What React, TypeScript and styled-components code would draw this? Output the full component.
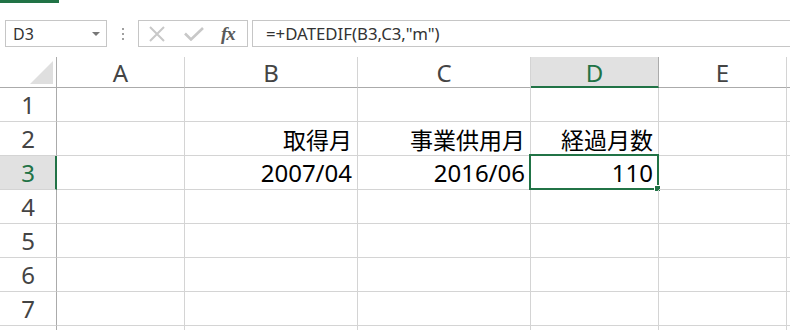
import * as React from 'react'
import styled, { createGlobalStyle, css } from 'styled-components'

const GREEN = '#217346'
const GRID = '#d4d4d4'
const HEAD_LINE = '#ababab'
const SEL_BG = '#e1e1e1'

const GlobalStyle = createGlobalStyle`
  html, body {
    margin: 0;
    padding: 0;
    background: #ffffff;
    overflow: hidden;
  }
  body {
    font-family: 'Noto Sans', 'Noto Sans CJK JP', sans-serif;
  }
`

const Page = styled.div`
  width: 790px;
  height: 330px;
  overflow: hidden;
  background: #ffffff;
`

const TabStrip = styled.div`
  width: 59px;
  height: 3px;
  background: ${GREEN};
`

const FormulaRow = styled.div`
  display: flex;
  align-items: center;
  height: 27px;
  margin-top: 17px;
  padding-left: 5px;
`

const NameBox = styled.div`
  box-sizing: border-box;
  width: 102px;
  height: 27px;
  border: 1px solid #c6c6c6;
  display: flex;
  align-items: center;
  justify-content: space-between;
  padding: 0 6px 0 7px;
  font-size: 16px;
  color: #333;
`

const DropArrow = styled.span`
  width: 0;
  height: 0;
  border-left: 4px solid transparent;
  border-right: 4px solid transparent;
  border-top: 4px solid #777;
`

const Grip = styled.div`
  width: 31px;
  display: flex;
  flex-direction: column;
  align-items: center;
  gap: 3px;
`

const GripDot = styled.span`
  width: 2px;
  height: 2px;
  background: #a0a0a0;
`

const FxBox = styled.div`
  box-sizing: border-box;
  width: 110px;
  height: 27px;
  border: 1px solid #c6c6c6;
  display: flex;
  align-items: center;
  padding-left: 9px;
`

const IconSlot = styled.span`
  width: 36px;
  display: flex;
  align-items: center;
`

const FxText = styled.span`
  font-family: 'Liberation Serif', 'DejaVu Serif', serif;
  font-style: italic;
  font-weight: bold;
  font-size: 19px;
  color: #5a5a5a;
  letter-spacing: -1px;
  margin-left: 1px;
`

const FormulaInput = styled.div`
  box-sizing: border-box;
  flex: 1;
  height: 27px;
  margin-left: 4px;
  border: 1px solid #c6c6c6;
  border-right: none;
  display: flex;
  align-items: center;
  padding-left: 13px;
  font-size: 16.8px;
  color: #333;
  white-space: nowrap;
`

const Sheet = styled.div`
  margin-top: 10px;
  display: grid;
  grid-template-columns: 57px 128px 173px 173px 128px 128px 1fr;
  grid-auto-rows: 34px;
  grid-template-rows: 31px;
`

const Corner = styled.div`
  box-sizing: border-box;
  border-right: 1px solid ${HEAD_LINE};
  border-bottom: 1px solid ${HEAD_LINE};
  display: flex;
  align-items: flex-end;
  justify-content: flex-end;
  padding: 0 3px 3px 0;
`

const ColHead = styled.div<{ $active?: boolean }>`
  box-sizing: border-box;
  border-right: 1px solid ${GRID};
  border-bottom: 1px solid ${HEAD_LINE};
  display: flex;
  align-items: center;
  justify-content: center;
  font-size: 24px;
  color: #444;
  ${(p) =>
    p.$active &&
    css`
      background: ${SEL_BG};
      color: ${GREEN};
      border-right-color: ${HEAD_LINE};
      border-bottom: 2px solid ${GREEN};
      padding-top: 1px;
    `}
`

const RowHead = styled.div<{ $active?: boolean }>`
  box-sizing: border-box;
  border-right: 1px solid ${HEAD_LINE};
  border-bottom: 1px solid ${GRID};
  display: flex;
  align-items: center;
  justify-content: center;
  font-size: 24px;
  color: #444;
  ${(p) =>
    p.$active &&
    css`
      background: ${SEL_BG};
      color: ${GREEN};
      border-right: 2px solid ${GREEN};
      padding-left: 1px;
    `}
`

const Cell = styled.div<{ $jp?: boolean }>`
  position: relative;
  box-sizing: border-box;
  border-right: 1px solid ${GRID};
  border-bottom: 1px solid ${GRID};
  display: flex;
  align-items: center;
  justify-content: flex-end;
  padding-right: 5px;
  font-size: ${(p) => (p.$jp ? '23px' : '24px')};
  font-family: ${(p) =>
    p.$jp
      ? "'Noto Sans CJK JP', sans-serif"
      : "'Noto Sans', 'Noto Sans CJK JP', sans-serif"};
  color: #000;
  white-space: nowrap;
`

const Selection = styled.div`
  position: absolute;
  left: -2px;
  top: -2px;
  right: -1px;
  bottom: -1px;
  border: 2px solid ${GREEN};
  pointer-events: none;
`

const FillHandle = styled.div`
  position: absolute;
  right: -4px;
  bottom: -4px;
  width: 5px;
  height: 5px;
  background: ${GREEN};
  border: 1px solid #fff;
`

const columns = ['A', 'B', 'C', 'D', 'E', '']

const data: Record<number, Record<string, { text: string; jp?: boolean }>> = {
  2: {
    B: { text: '取得月', jp: true },
    C: { text: '事業供用月', jp: true },
    D: { text: '経過月数', jp: true },
  },
  3: {
    B: { text: '2007/04' },
    C: { text: '2016/06' },
    D: { text: '110' },
  },
}

const CrossIcon = () => (
  <svg width="18" height="16" viewBox="0 0 18 16">
    <path d="M2 1 L16 15 M16 1 L2 15" stroke="#c8c8c8" strokeWidth="2" fill="none" />
  </svg>
)

const CheckIcon = () => (
  <svg width="20" height="14" viewBox="0 0 20 14">
    <path d="M1 6.5 L7 12.5 L19 1" stroke="#c8c8c8" strokeWidth="2.6" fill="none" />
  </svg>
)

const CornerTriangle = () => (
  <svg width="23" height="23" viewBox="0 0 23 23">
    <polygon points="23,0 23,23 0,23" fill="#dfdfdf" />
  </svg>
)

export default function App(): JSX.Element {
  // row 8 only peeks in at the bottom edge, its number is below the fold
  const rows = [1, 2, 3, 4, 5, 6, 7, 8]
  return (
    <Page>
      <GlobalStyle />
      <TabStrip />
      <FormulaRow>
        <NameBox>
          <span>D3</span>
          <DropArrow />
        </NameBox>
        <Grip>
          <GripDot />
          <GripDot />
          <GripDot />
        </Grip>
        <FxBox>
          <IconSlot>
            <CrossIcon />
          </IconSlot>
          <IconSlot>
            <CheckIcon />
          </IconSlot>
          <FxText>fx</FxText>
        </FxBox>
        <FormulaInput>=+DATEDIF(B3,C3,"m")</FormulaInput>
      </FormulaRow>
      <Sheet>
        <Corner>
          <CornerTriangle />
        </Corner>
        {columns.map((c, i) => (
          <ColHead key={`h${i}`} $active={c === 'D'}>
            {c}
          </ColHead>
        ))}
        {rows.map((r) => (
          <React.Fragment key={r}>
            <RowHead $active={r === 3}>{r < 8 ? r : ''}</RowHead>
            {columns.map((c, i) => {
              const v = data[r]?.[c]
              const selected = r === 3 && c === 'D'
              return (
                <Cell key={`${r}-${i}`} $jp={v?.jp}>
                  {v?.text}
                  {selected && (
                    <Selection>
                      <FillHandle />
                    </Selection>
                  )}
                </Cell>
              )
            })}
          </React.Fragment>
        ))}
      </Sheet>
    </Page>
  )
}
